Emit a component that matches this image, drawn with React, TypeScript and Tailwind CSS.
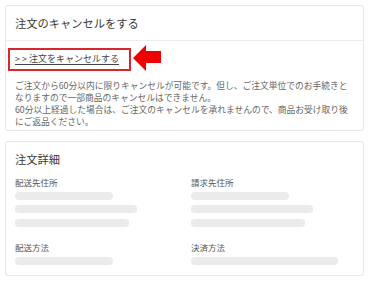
const font = "font-['Noto_Sans_CJK_JP','Noto_Sans',sans-serif]";

function Bar({ w }: { w: string }) {
  return <div className={`h-[8px] rounded-full bg-[#ebebeb] ${w}`} />;
}

function Field({ label, bars }: { label: string; bars: string[] }) {
  return (
    <div className="flex flex-col">
      <p className="text-[8.5px] leading-[12px] text-[#555]">{label}</p>
      <div className="mt-[4px] flex flex-col gap-[5.3px]">
        {bars.map((w, i) => (
          <Bar key={i} w={w} />
        ))}
      </div>
    </div>
  );
}

function Arrow() {
  return (
    <svg width="30" height="28" viewBox="0 0 30 28" className="ml-[1px] shrink-0">
      <polygon points="1,13 14,0 14,6 29,6 29,18 14,18 14,26" fill="#f00000" />
    </svg>
  );
}

export default function App() {
  return (
    <div className={`w-[370px] h-[283px] bg-white px-[5px] pt-[5px] ${font}`}>
      {/* Cancel card */}
      <section className="w-[359px] h-[126px] border border-[#e6e6e6] rounded-[3px]">
        <div className="h-[35px] flex items-center pl-[9px] border-b border-[#ececec]">
          <h2 className="text-[11.25px] text-[#3a3a3a]">注文のキャンセルをする</h2>
        </div>
        <div className="pt-[4px] pl-[2px]">
          <div className="flex items-center">
            <div className="w-[123px] h-[23px] border-2 border-[#d7262c] flex items-center pl-[5px]">
              <span className="text-[9px] leading-[12px] text-[#444] underline underline-offset-[2px] whitespace-nowrap">
                &gt; &gt; 注文をキャンセルする
              </span>
            </div>
            <Arrow />
          </div>
          <p className="mt-[7px] pl-[7px] text-[8.75px] leading-[12px] text-[#666] whitespace-nowrap">
            ご注文から60分以内に限りキャンセルが可能です。但し、ご注文単位でのお手続きと
            <br />
            なりますので一部商品のキャンセルはできません。
            <br />
            60分以上経過した場合は、ご注文のキャンセルを承れませんので、商品お受け取り後
            <br />
            にご返品ください。
          </p>
        </div>
      </section>

      {/* Order details card */}
      <section className="mt-[10px] w-[359px] h-[135px] border border-[#e6e6e6] rounded-[3px] px-[9px] pt-[9px]">
        <h2 className="text-[11.25px] leading-[16px] text-[#3a3a3a]">注文詳細</h2>
        <div className="mt-[9px] grid grid-cols-[176px_1fr]">
          <div className="flex flex-col gap-[14px]">
            <Field label="配送先住所" bars={["w-[98px]", "w-[122px]", "w-[114px]"]} />
            <Field label="配送方法" bars={["w-[98px]"]} />
          </div>
          <div className="flex flex-col gap-[14px]">
            <Field label="請求先住所" bars={["w-[98px]", "w-[122px]", "w-[114px]"]} />
            <Field label="決済方法" bars={["w-[147px]"]} />
          </div>
        </div>
      </section>
    </div>
  );
}
